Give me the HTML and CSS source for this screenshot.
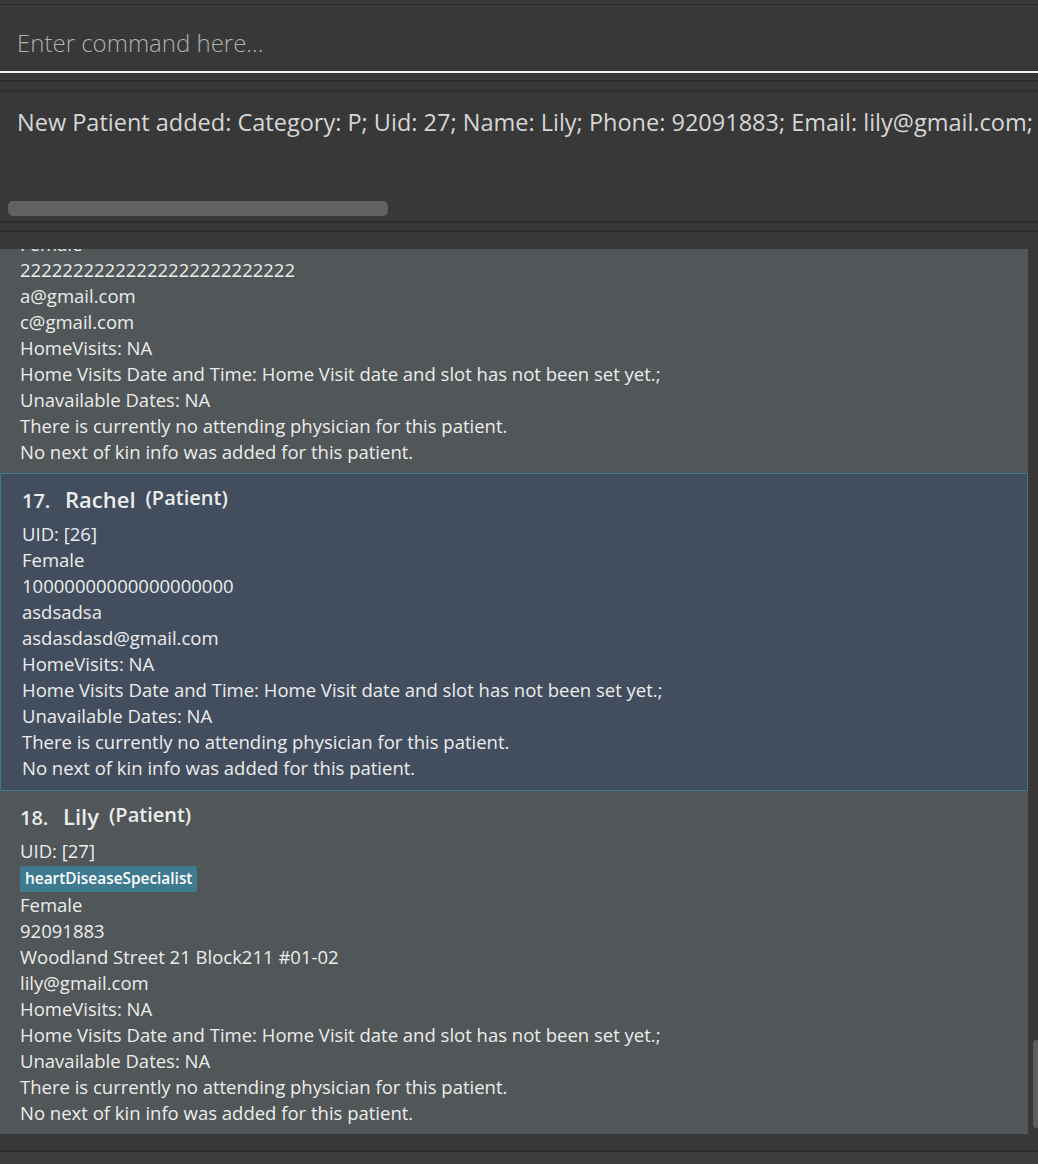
FILE: index.html
```html
<!DOCTYPE html>
<html>
<head>
<meta charset="utf-8">
<link rel="stylesheet" href="styles.css">
</head>
<body>
<div class="app">
  <div class="top"></div>
  <div class="cmd"><span class="placeholder">Enter command here...</span></div>
  <div class="result-outer">
    <div class="result">
      <div class="result-text">New Patient added: Category: P; Uid: 27; Name: Lily; Phone: 92091883; Email: lily@gmail.com;</div>
      <div class="hscroll"><div class="hthumb"></div></div>
    </div>
  </div>
  <div class="list-pane">
    <div class="list">
      <div class="card card-partial">
        <div class="line">Female</div>
        <div class="line">22222222222222222222222222</div>
        <div class="line">a@gmail.com</div>
        <div class="line">c@gmail.com</div>
        <div class="line">HomeVisits: NA</div>
        <div class="line">Home Visits Date and Time: Home Visit date and slot has not been set yet.;</div>
        <div class="line">Unavailable Dates: NA</div>
        <div class="line">There is currently no attending physician for this patient.</div>
        <div class="line">No next of kin info was added for this patient.</div>
      </div>
      <div class="card card-selected">
        <div class="head"><span class="num">17.</span><span class="name">Rachel</span><span class="cat">(Patient)</span></div>
        <div class="line">UID: [26]</div>
        <div class="line">Female</div>
        <div class="line">10000000000000000000</div>
        <div class="line">asdsadsa</div>
        <div class="line">asdasdasd@gmail.com</div>
        <div class="line">HomeVisits: NA</div>
        <div class="line">Home Visits Date and Time: Home Visit date and slot has not been set yet.;</div>
        <div class="line">Unavailable Dates: NA</div>
        <div class="line">There is currently no attending physician for this patient.</div>
        <div class="line">No next of kin info was added for this patient.</div>
      </div>
      <div class="card">
        <div class="head"><span class="num">18.</span><span class="name">Lily</span><span class="cat">(Patient)</span></div>
        <div class="line">UID: [27]</div>
        <div class="tags"><span class="tag">heartDiseaseSpecialist</span></div>
        <div class="line">Female</div>
        <div class="line">92091883</div>
        <div class="line">Woodland Street 21 Block211 #01-02</div>
        <div class="line">lily@gmail.com</div>
        <div class="line">HomeVisits: NA</div>
        <div class="line">Home Visits Date and Time: Home Visit date and slot has not been set yet.;</div>
        <div class="line">Unavailable Dates: NA</div>
        <div class="line">There is currently no attending physician for this patient.</div>
        <div class="line">No next of kin info was added for this patient.</div>
      </div>
    </div>
    <div class="vscroll"><div class="vthumb"></div></div>
  </div>
  <div class="status"></div>
</div>
</body>
</html>
```

FILE: styles.css
```css
* { box-sizing: border-box; }
html, body { margin: 0; padding: 0; }
body {
  background: #383838;
  font-family: "Open Sans", "Noto Sans", sans-serif;
  color: #ececec;
  width: 1038px;
  height: 1164px;
  overflow: hidden;
}
.app { display: flex; flex-direction: column; height: 1164px; }
.top { height: 5px; border-bottom: 1px solid #2b2b2b; }
.cmd {
  height: 68px;
  border-bottom: 2px solid #f2f2f2;
  padding: 23px 0 0 17px;
}
.placeholder {
  display: block;
  font-size: 24px;
  line-height: 30px;
  font-weight: 300;
  color: #b0b0b0;
}
.result-outer {
  margin-top: 7px;
  border-top: 2px solid #2c2c2c;
  padding-top: 8px;
}
.result {
  border-top: 2px solid #2e2e2e;
  border-bottom: 2px solid #2c2c2c;
  height: 133px;
  overflow: hidden;
}
.result-text {
  padding: 16px 0 0 17px;
  line-height: 28px;
  font-size: 23.5px;
  color: #d6d6d6;
  white-space: nowrap;
}
.hscroll { margin: 65px 0 0 8px; height: 15px; }
.hthumb { width: 380px; height: 15px; border-radius: 5px; background: #616161; }
.list-pane {
  position: relative;
  margin-top: 7px;
  border-top: 2px solid #2c2c2c;
  padding-top: 17px;
  height: 920px;
}
.list { height: 901px; overflow: hidden; width: 1028px; }
.card {
  background: #515658;
  padding: 0 0 9px 20px;
  font-size: 18.5px;
}
.card-partial { margin-top: -19px; }
.card-selected {
  background: #424e5e;
  border: 1px solid #3b7c94;
  padding-left: 21px;
  padding-bottom: 10px;
}
.line { height: 26px; line-height: 27px; white-space: nowrap; }
.head {
  height: 46px;
  display: flex;
  align-items: baseline;
  padding-top: 10px;
  font-weight: 600;
}
.num { font-size: 20px; width: 43px; }
.name { font-size: 22px; margin-right: 10px; }
.cat { font-size: 20px; position: relative; top: -3px; }
.tags { height: 28px; padding-top: 1px; }
.tag {
  display: inline-block;
  height: 26px;
  line-height: 26px;
  padding: 0 5px;
  background: #3e7a90;
  color: #ffffff;
  font-weight: 600;
  font-size: 15.4px;
  border-radius: 2px;
}
.vscroll {
  position: absolute;
  right: 0;
  top: 0;
  width: 10px;
  height: 100%;
}
.vthumb {
  position: absolute;
  left: 5px;
  top: 808px;
  width: 8px;
  height: 88px;
  border-radius: 4px;
  background: #5c5c5c;
}
.status { flex: 1; border-top: 2px solid #2b2b2b; background: #3d3d3d; }
```
